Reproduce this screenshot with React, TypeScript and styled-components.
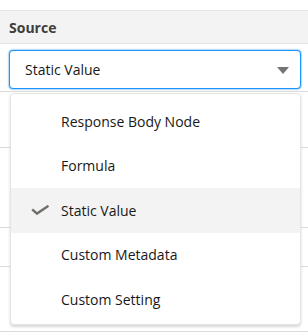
import React from "react";
import styled, { createGlobalStyle } from "styled-components";

const GlobalStyle = createGlobalStyle`
  html, body {
    margin: 0;
    padding: 0;
    background: #ffffff;
  }
  body {
    font-family: "Open Sans", "Noto Sans", Arial, sans-serif;
    color: #181818;
    overflow: hidden;
  }
`;

const Page = styled.div`
  width: 308px;
  height: 333px;
  padding-top: 10px;
  box-sizing: border-box;
`;

const HeaderCell = styled.div`
  height: 31px;
  display: flex;
  align-items: center;
  padding: 1px 9px 0;
  box-sizing: content-box;
  background: #f3f3f3;
  border-top: 1px solid #e5e5e5;
  border-bottom: 1px solid #e5e5e5;
  font-weight: 700;
  font-size: 14px;
  color: #3e3e3c;
`;

const FieldRow = styled.div`
  height: 48px;
  padding: 6px 7px 0 9px;
  box-sizing: border-box;
  border-bottom: 1px solid #dddbda;
`;

const SelectWrap = styled.div`
  position: relative;
`;

const SelectBox = styled.div`
  height: 39px;
  box-sizing: border-box;
  border: 1px solid #1b96ff;
  box-shadow: 0 0 2px #0176d3;
  border-radius: 4px;
  display: flex;
  align-items: center;
  justify-content: space-between;
  padding: 0 11px 0 15px;
  font-size: 14px;
  color: #181818;
  background: #fff;
`;

const Caret = styled.span`
  width: 0;
  height: 0;
  border-left: 6px solid transparent;
  border-right: 6px solid transparent;
  border-top: 7px solid #747474;
  margin-top: 2px;
`;

const Menu = styled.ul`
  position: absolute;
  top: 43px;
  left: 1px;
  right: 0;
  margin: 0;
  padding: 5px 0 2px;
  list-style: none;
  background: #fff;
  border: 1px solid #e5e5e5;
  border-radius: 4px;
  box-shadow: 0 2px 3px rgba(0, 0, 0, 0.16);
  z-index: 2;
`;

const Item = styled.li<{ $selected?: boolean }>`
  height: 44.5px;
  display: flex;
  align-items: center;
  padding-left: 50px;
  font-size: 14px;
  color: #181818;
  background: ${(p) => (p.$selected ? "#f3f3f3" : "transparent")};
`;

const CheckSlot = styled.span`
  width: 20px;
  margin-left: -30px;
  margin-right: 10px;
  display: flex;
  align-items: center;
`;

const BlankRow = styled.div<{ $h: number }>`
  height: ${(p) => p.$h - 1}px;
  border-bottom: 1px solid #dddbda;
`;

const Check = () => (
  <svg width="19" height="10" viewBox="0 0 19 10">
    <path d="M1.2 4.3 L6 8.6 L17.5 0.8" fill="none" stroke="#706e6b" strokeWidth="2.4" />
  </svg>
);

const options = [
  "Response Body Node",
  "Formula",
  "Static Value",
  "Custom Metadata",
  "Custom Setting",
];

export default function App() {
  const value = "Static Value";
  return (
    <Page>
      <GlobalStyle />
      <HeaderCell>Source</HeaderCell>
      <FieldRow>
        <SelectWrap>
          <SelectBox>
            <span>{value}</span>
            <Caret />
          </SelectBox>
          <Menu>
            {options.map((o) => (
              <Item key={o} $selected={o === value}>
                {o === value && (
                  <CheckSlot>
                    <Check />
                  </CheckSlot>
                )}
                {o}
              </Item>
            ))}
          </Menu>
        </SelectWrap>
      </FieldRow>
      <BlankRow $h={56} />
      <BlankRow $h={80} />
      <BlankRow $h={39} />
      <BlankRow $h={65} />
    </Page>
  );
}
